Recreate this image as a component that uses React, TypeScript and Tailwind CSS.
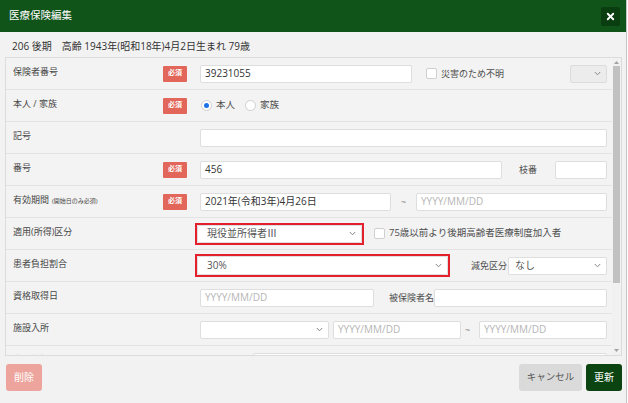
import { X } from 'lucide-react';

type Children = { children?: React.ReactNode };

function Chevron() {
  return (
    <svg width="7" height="5" viewBox="0 0 7 5" className="text-[#888]">
      <path d="M0.8 1 L3.5 3.8 L6.2 1" fill="none" stroke="currentColor" strokeWidth="1" />
    </svg>
  );
}

function Badge() {
  return (
    <div className="flex h-[16px] w-[24px] items-center justify-center rounded-[1px] bg-[#e3665a] text-[7px] font-bold text-white">
      必須
    </div>
  );
}

function Input({ className = '', value, placeholder }: { className?: string; value?: string; placeholder?: string }) {
  return (
    <div className={`flex h-[18px] items-center rounded-[2px] border border-[#dedede] bg-white px-[4px] text-[10px] ${className}`}>
      {value ? <span className="text-[#333]">{value}</span> : <span className="text-[#b5b5b5]">{placeholder}</span>}
    </div>
  );
}

function Select({ className = '', value }: { className?: string; value?: string }) {
  return (
    <div className={`flex h-[18px] items-center justify-between rounded-[2px] border border-[#dedede] bg-white pl-[6px] pr-[5px] text-[10px] text-[#555] ${className}`}>
      <span>{value}</span>
      <Chevron />
    </div>
  );
}

function Checkbox() {
  return <div className="h-[11px] w-[11px] rounded-[2px] border border-[#cfcfcf] bg-white" />;
}

function Row({ label, sub, required, children }: Children & { label: string; sub?: string; required?: boolean }) {
  return (
    <div className="flex h-[32px] shrink-0 items-center border-b border-[#e3e3e3]">
      <div className="mb-[3px] w-[157px] pl-[7px] text-[9px] text-[#474747]">
        {label}
        {sub && <span className="ml-[3px] text-[6px]">{sub}</span>}
      </div>
      <div className="w-[37px]">{required && <Badge />}</div>
      <div className="flex flex-1 items-center pr-[5px] text-[9px] text-[#4d4d4d]">{children}</div>
    </div>
  );
}

export default function App() {
  return (
    <div className="flex h-[403px] w-[627px] flex-col border-r border-[#c4c4c4] bg-[#f2f2f2] font-['Open_Sans','Noto_Sans_CJK_JP',sans-serif]">
      <div className="flex h-[32px] shrink-0 items-center justify-between bg-[#10541a] pl-[9px] pr-[6px]">
        <span className="text-[10.5px] text-white">医療保険編集</span>
        <div className="flex h-[19px] w-[19px] items-center justify-center rounded-[2px] bg-[#0a3d0f]">
          <X size={11} strokeWidth={4} className="text-white" />
        </div>
      </div>

      <div className="flex h-[25px] shrink-0 items-center pl-[12px] pt-[3px] text-[10px] text-[#333]">
        206 後期　高齢 1943年(昭和18年)4月2日生まれ 79歳
      </div>

      <div className="ml-[5px] flex h-[299px] w-[617px] shrink-0 border border-[#dcdcdc] bg-[#f3f3f3]">
        <div className="flex flex-1 flex-col overflow-hidden">
          <Row label="保険者番号" required>
            <Input className="w-[212px]" value="39231055" />
            <div className="ml-[14px]"><Checkbox /></div>
            <span className="ml-[4px]">災害のため不明</span>
            <div className="ml-auto flex h-[18px] w-[37px] items-center justify-end rounded-[2px] border border-[#dcdcdc] bg-[#ececec] pr-[5px]">
              <Chevron />
            </div>
          </Row>

          <Row label="本人 / 家族" required>
            <div className="ml-[1px] flex h-[11px] w-[11px] items-center justify-center rounded-full border border-[#cfcfcf] bg-white">
              <div className="h-[5px] w-[5px] rounded-full bg-[#1a73e8]" />
            </div>
            <span className="ml-[4px] text-[9.5px]">本人</span>
            <div className="ml-[10px] h-[11px] w-[11px] rounded-full border border-[#cfcfcf] bg-white" />
            <span className="ml-[4px] text-[9.5px]">家族</span>
          </Row>

          <Row label="記号">
            <Input className="flex-1" />
          </Row>

          <Row label="番号" required>
            <Input className="w-[302px]" value="456" />
            <span className="ml-[17px]">枝番</span>
            <Input className="ml-auto w-[52px]" />
          </Row>

          <Row label="有効期間" sub="(開始日のみ必須)" required>
            <Input className="w-[191px]" value="2021年(令和3年)4月26日" />
            <span className="ml-[10px] text-[#888]">~</span>
            <Input className="ml-auto w-[191px]" placeholder="YYYY/MM/DD" />
          </Row>

          <Row label="適用(所得)区分">
            <div className="-ml-[5px] h-[22px] w-[169px] border-2 border-[#e3202b]">
              <Select className="h-full pl-[9px]" value="現役並所得者Ⅲ" />
            </div>
            <div className="ml-[10px]"><Checkbox /></div>
            <span className="ml-[4px] text-[9.5px]">75歳以前より後期高齢者医療制度加入者</span>
          </Row>

          <Row label="患者負担割合">
            <div className="-ml-[5px] h-[23px] w-[255px] border-2 border-[#e3202b]">
              <Select className="h-full pl-[9px]" value="30%" />
            </div>
            <span className="ml-[21px]">減免区分</span>
            <Select className="ml-auto w-[99px]" value="なし" />
          </Row>

          <Row label="資格取得日">
            <Input className="w-[174px]" placeholder="YYYY/MM/DD" />
            <span className="ml-[15px]">被保険者名</span>
            <Input className="flex-1" />
          </Row>

          <Row label="施設入所">
            <Select className="w-[129px]" />
            <Input className="ml-[4px] w-[128px]" placeholder="YYYY/MM/DD" />
            <span className="ml-[4px] text-[#888]">~</span>
            <Input className="ml-auto w-[128px]" placeholder="YYYY/MM/DD" />
          </Row>

          <Row label="患者負担区分">
            <span className="text-[7px]">開始日</span>
            <Input className="ml-auto w-[354px]" />
          </Row>
        </div>

        <div className="flex w-[9px] flex-col items-center bg-[#f1f1f1] pt-[3px] pb-[3px]">
          <svg width="5" height="3" viewBox="0 0 5 3"><path d="M0 3 L2.5 0 L5 3 Z" fill="#a3a3a3" /></svg>
          <div className="mt-[2px] h-[217px] w-[7px] bg-[#c1c1c1]" />
          <div className="flex-1" />
          <svg width="5" height="3" viewBox="0 0 5 3"><path d="M0 0 L2.5 3 L5 0 Z" fill="#a3a3a3" /></svg>
        </div>
      </div>

      <div className="flex flex-1 items-start justify-between pl-[6px] pr-[4px] pt-[8px]">
        <button className="h-[27px] w-[36px] rounded-[3px] bg-[#eca49c] text-[10px] text-white">削除</button>
        <div className="flex gap-[4px]">
          <button className="h-[27px] w-[63px] rounded-[3px] bg-[#dadada] text-[9.5px] text-[#555]">キャンセル</button>
          <button className="h-[27px] w-[36px] rounded-[3px] bg-[#0b4411] text-[10px] text-white">更新</button>
        </div>
      </div>
    </div>
  );
}
